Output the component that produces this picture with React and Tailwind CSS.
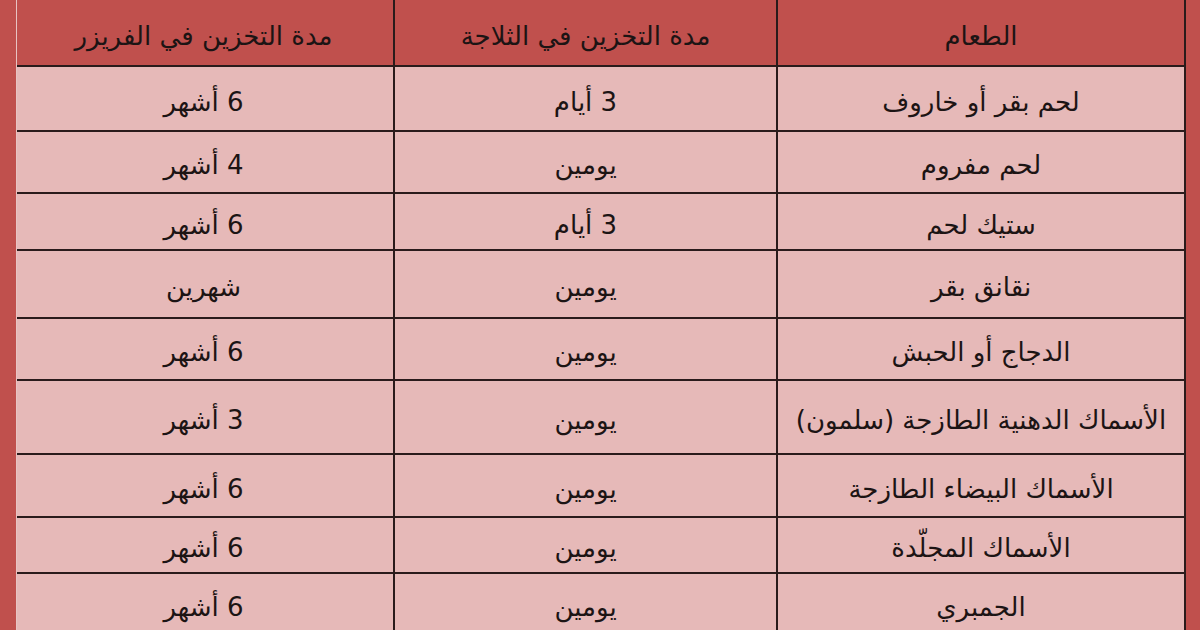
import React from "react";

const rows = [
  { h: "h-[65px]", food: "لحم بقر أو خاروف", fridge: "3 أيام", freezer: "6 أشهر" },
  { h: "h-[62px]", food: "لحم مفروم", fridge: "يومين", freezer: "4 أشهر" },
  { h: "h-[57px]", food: "ستيك لحم", fridge: "3 أيام", freezer: "6 أشهر" },
  { h: "h-[68px]", food: "نقانق بقر", fridge: "يومين", freezer: "شهرين" },
  { h: "h-[62px]", food: "الدجاج أو الحبش", fridge: "يومين", freezer: "6 أشهر" },
  { h: "h-[74px]", food: "الأسماك الدهنية الطازجة (سلمون)", fridge: "يومين", freezer: "3 أشهر" },
  { h: "h-[63px]", food: "الأسماك البيضاء الطازجة", fridge: "يومين", freezer: "6 أشهر" },
  { h: "h-[56px]", food: "الأسماك المجلّدة", fridge: "يومين", freezer: "6 أشهر" },
  { h: "h-[62px]", food: "الجمبري", fridge: "يومين", freezer: "6 أشهر" },
];

function Cell({ children, last }) {
  return (
    <div
      className={
        "flex items-center justify-center pt-[6px] " +
        (last ? "" : "border-l-2 border-[#2a1b1b]")
      }
    >
      {children}
    </div>
  );
}

export default function App() {
  return (
    <div
      className="w-[1200px] h-[630px] overflow-hidden bg-[#c0504d] pl-[16px]"
      style={{ fontFamily: '"DejaVu Sans", sans-serif' }}
    >
      <div
        dir="rtl"
        className="w-[1170px] border-l border-l-[#e8c4c3] border-r-2 border-r-[#2a1b1b] text-[26px] leading-[32px] text-[#1c1414]"
      >
        <div className="grid grid-cols-[408px_383px_379px] h-[67px] bg-[#c0504d] border-b-2 border-[#2a1b1b]">
          <Cell>الطعام</Cell>
          <Cell>مدة التخزين في الثلاجة</Cell>
          <Cell last>مدة التخزين في الفريزر</Cell>
        </div>
        {rows.map((r, i) => (
          <div
            key={i}
            className={
              "grid grid-cols-[408px_383px_379px] bg-[#e6b9b8] border-b-2 border-[#2a1b1b] " +
              r.h
            }
          >
            <Cell>{r.food}</Cell>
            <Cell>{r.fridge}</Cell>
            <Cell last>{r.freezer}</Cell>
          </div>
        ))}
      </div>
    </div>
  );
}
